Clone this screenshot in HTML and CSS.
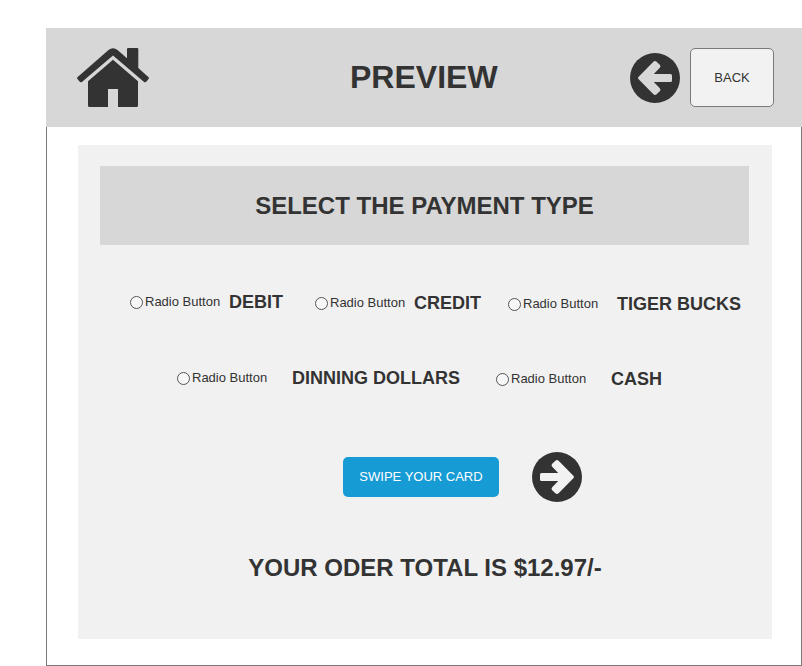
FILE: index.html
```html
<!DOCTYPE html>
<html lang="en">
<head>
<meta charset="utf-8">
<title>Preview</title>
<link rel="stylesheet" href="styles.css">
</head>
<body>
<div class="frame">
  <header class="header">
    <svg class="home" width="72" height="60" viewBox="0 0 72 60">
      <path d="M0.4 30.2 L31.5 2.9 Q36 -.6 40.5 2.9 L50 11.2 V2 Q50 1 51 1 H60.3 Q61.3 1 61.3 2 V21 L71.6 30.2 Q72.3 31 71.5 32 L69.5 34.4 Q68.2 35.9 66.8 34.7 L36 8.4 L5.2 34.7 Q3.8 35.9 2.5 34.4 L.5 32 Q-.3 31 .4 30.2Z"/>
      <path d="M36 12.8 L61 34.2 V58.5 Q61 60 59.5 60 H41 V42 H31 V60 H12.5 Q11 60 11 58.5 V34.2Z"/>
    </svg>
    <h1 class="title">PREVIEW</h1>
    <svg class="arrow arrow-back" width="50" height="50" viewBox="0 0 50 50">
      <circle cx="25" cy="25" r="25"/>
      <path d="M8.4 24 L23.4 8.7 Q25 7.1 26.6 8.7 L29.8 11.7 Q31.3 13.2 29.8 14.8 L23.8 21 H40.5 Q42 21 42 22.5 V27.5 Q42 29 40.5 29 H23.8 L29.8 35.2 Q31.3 36.8 29.8 38.3 L26.6 41.3 Q25 42.9 23.4 41.3 L8.4 26 Q7.6 25 8.4 24Z"/>
    </svg>
    <button class="back">BACK</button>
  </header>
  <main class="panel">
    <h2 class="banner">SELECT THE PAYMENT TYPE</h2>
    <div class="row row-top">
      <label class="option"><input type="radio" name="pay">Radio Button</label>
      <b class="name">DEBIT</b>
      <label class="option low"><input type="radio" name="pay">Radio Button</label>
      <b class="name low">CREDIT</b>
      <label class="option lower"><input type="radio" name="pay">Radio Button</label>
      <b class="name lower">TIGER BUCKS</b>
    </div>
    <div class="row row-bottom">
      <label class="option"><input type="radio" name="pay">Radio Button</label>
      <b class="name">DINNING DOLLARS</b>
      <label class="option low"><input type="radio" name="pay">Radio Button</label>
      <b class="name low">CASH</b>
    </div>
    <div class="actions">
      <button class="swipe">SWIPE YOUR CARD</button>
      <svg class="arrow arrow-next" width="50" height="50" viewBox="0 0 50 50">
        <circle cx="25" cy="25" r="25"/>
        <path transform="matrix(-1 0 0 1 50 0)" d="M8.4 24 L23.4 8.7 Q25 7.1 26.6 8.7 L29.8 11.7 Q31.3 13.2 29.8 14.8 L23.8 21 H40.5 Q42 21 42 22.5 V27.5 Q42 29 40.5 29 H23.8 L29.8 35.2 Q31.3 36.8 29.8 38.3 L26.6 41.3 Q25 42.9 23.4 41.3 L8.4 26 Q7.6 25 8.4 24Z"/>
      </svg>
    </div>
    <p class="total">YOUR ODER TOTAL IS $12.97/-</p>
  </main>
</div>
</body>
</html>
```
FILE: styles.css
```css
* { box-sizing: border-box; }
body {
  margin: 0;
  padding: 28px 0 0 46px;
  background: #fff;
  color: #333;
  font: 13px/15px "Liberation Sans", Arial, sans-serif;
}
h1, h2, p { margin: 0; }
button { font: inherit; color: inherit; padding: 0; }
.frame {
  width: 756px;
  height: 638px;
  border: 1px solid #797979;
  border-top: 0;
}
.header {
  display: flex;
  align-items: flex-start;
  height: 99px;
  margin: 0 -1px;
  background: #d7d7d7;
}
.home { margin: 19px 0 0 31px; fill: #333; }
.title {
  width: 148px;
  margin: 31px 0 0 201px;
  font-size: 32px;
  line-height: 37px;
  white-space: nowrap;
}
.arrow { flex: none; }
.arrow circle { fill: #333; }
.arrow-back { margin: 25px 0 0 132px; }
.arrow-back path { fill: #d7d7d7; }
.arrow-next path { fill: #f2f2f2; }
.back {
  width: 84px;
  height: 59px;
  margin: 20px 0 0 10px;
  background: #f2f2f2;
  border: 1px solid #797979;
  border-radius: 5px;
}
.panel {
  width: 694px;
  height: 494px;
  margin: 18px 0 0 31px;
  padding-top: 21px;
  background: #f1f1f1;
}
.banner {
  width: 649px;
  height: 79px;
  margin-left: 22px;
  background: #d7d7d7;
  font-size: 24px;
  line-height: 79px;
  text-align: center;
}
.row {
  display: grid;
  align-items: start;
  height: 24px;
  white-space: nowrap;
}
.row-top {
  grid-template-columns: 99px 86px 99px 94px 109px 130px;
  margin: 46px 0 0 52px;
}
.row-bottom {
  grid-template-columns: 115px 204px 115px 60px;
  margin: 52px 0 0 99px;
}
.option { display: flex; padding-top: 3px; }
.option input {
  appearance: none;
  width: 13px;
  height: 13px;
  margin: 2px 2px 0 0;
  border: 1px solid #555;
  border-radius: 50%;
  background: #f7f7f7;
}
.name { padding-top: 1px; font-size: 18px; line-height: 21px; }
.option.low { padding-top: 4px; }
.option.lower { padding-top: 5px; }
.name.low { padding-top: 2px; }
.name.lower { padding-top: 3px; }
.actions {
  display: flex;
  align-items: center;
  gap: 33px;
  height: 50px;
  margin: 61px 0 0 265px;
}
.swipe {
  width: 156px;
  height: 40px;
  padding-bottom: 1px;
  background: #169bd5;
  border: 0;
  border-radius: 5px;
  color: #fff;
}
.total {
  margin-top: 52px;
  font-size: 24px;
  font-weight: bold;
  line-height: 28px;
  text-align: center;
}
```
